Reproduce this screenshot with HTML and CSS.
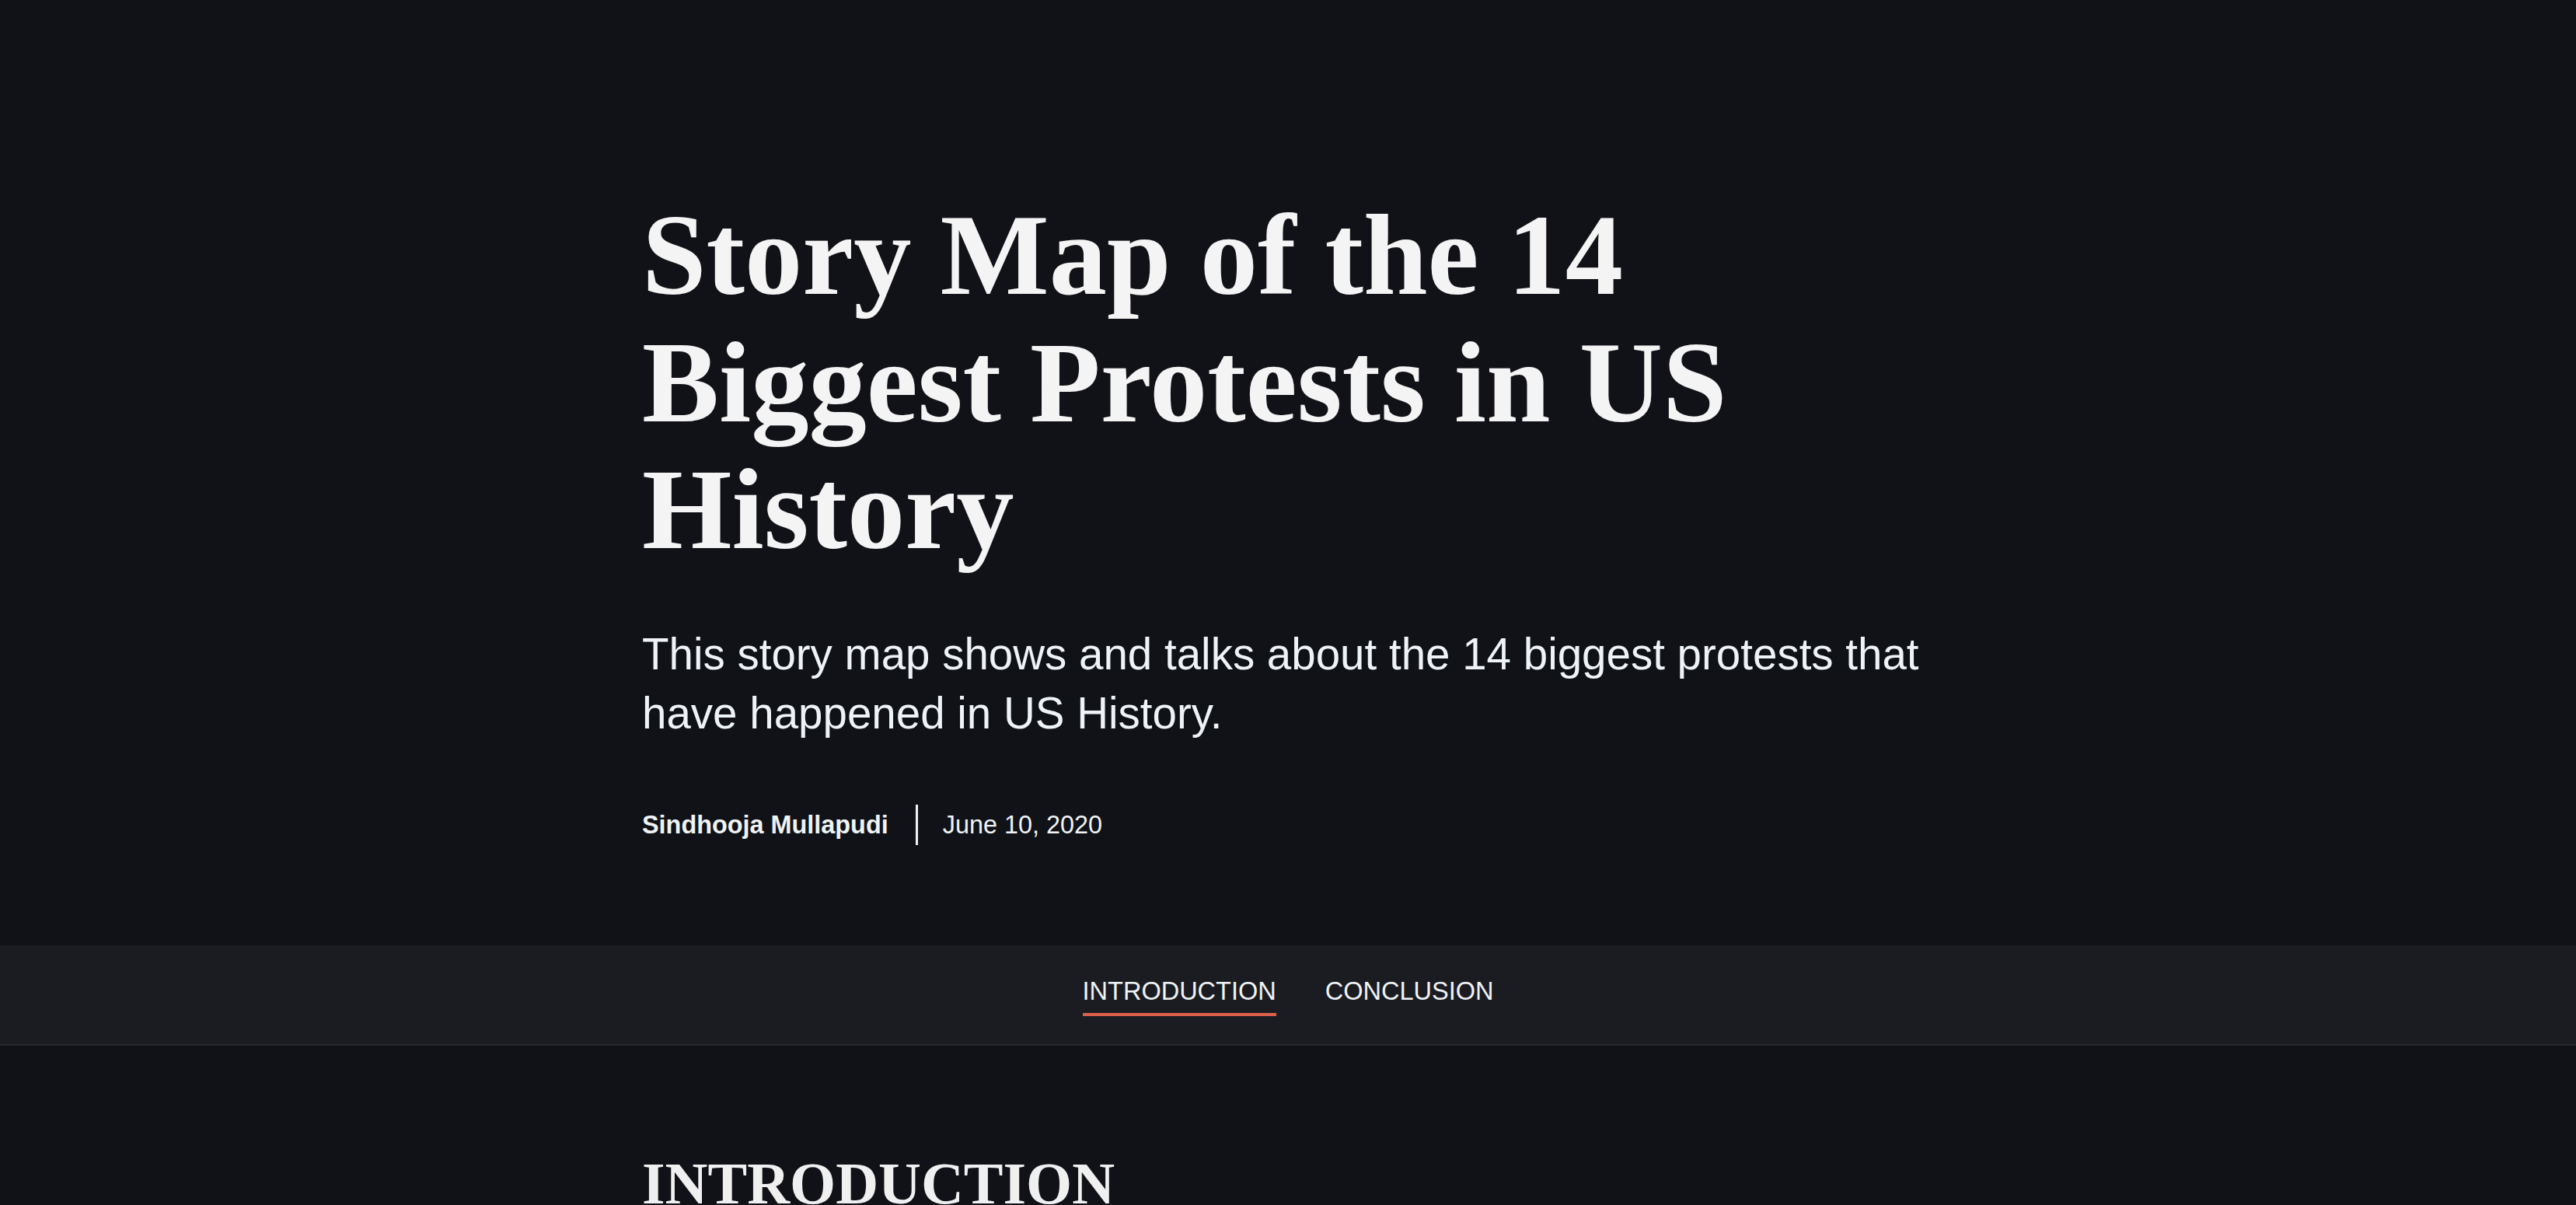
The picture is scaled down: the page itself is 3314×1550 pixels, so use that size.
FILE: index.html
```html
<!DOCTYPE html>
<html lang="en">
<head>
<meta charset="utf-8">
<title>Story Map of the 14 Biggest Protests in US History</title>
<link rel="stylesheet" href="styles.css">
</head>
<body>
<header class="cover">
  <div class="column">
    <h1 class="title">Story Map of the 14 Biggest Protests in US History</h1>
    <p class="summary">This story map shows and talks about the 14 biggest protests that have happened in US History.</p>
    <div class="byline">
      <span class="author">Sindhooja Mullapudi</span>
      <span class="divider"></span>
      <span class="date">June 10, 2020</span>
    </div>
  </div>
</header>
<nav class="navbar">
  <a class="nav-item active" href="#intro">INTRODUCTION</a>
  <a class="nav-item" href="#conclusion">CONCLUSION</a>
</nav>
<main class="content">
  <div class="column">
    <h2 class="section-title" id="intro">INTRODUCTION</h2>
  </div>
</main>
</body>
</html>
```

FILE: styles.css
```css
html, body {
  margin: 0;
  padding: 0;
}
body {
  background: #111217;
  color: #f3f3f3;
  font-family: "Liberation Sans", Arial, sans-serif;
  overflow: hidden;
}
.column {
  width: 1662px;
  margin: 0 auto;
}
.cover {
  padding: 247px 0 129px;
}
.title {
  margin: 0;
  font-family: "Liberation Serif", "Times New Roman", serif;
  font-weight: 700;
  font-size: 148.5px;
  line-height: 163.5px;
  color: #f4f4f4;
}
.summary {
  margin: 66px 0 0;
  font-size: 56.5px;
  line-height: 76px;
  color: #eef3f5;
}
.byline {
  margin-top: 79px;
  display: flex;
  align-items: center;
  font-size: 32.4px;
  line-height: 52px;
  color: #eef3f5;
}
.author {
  font-weight: 700;
}
.divider {
  width: 3px;
  height: 52px;
  background: #eef3f5;
  margin: 0 32px 0 35px;
}
.navbar {
  background: #1b1c21;
  border-bottom: 2px solid #2a2b30;
  display: flex;
  justify-content: center;
  gap: 63px;
  padding: 39px 0 36px;
}
.nav-item {
  font-size: 32.5px;
  line-height: 40px;
  color: #eef3f5;
  text-decoration: none;
  padding-bottom: 8px;
  border-bottom: 4px solid transparent;
}
.nav-item.active {
  border-bottom-color: #dc604a;
}
.content {
  padding-top: 132px;
}
.section-title {
  margin: 0;
  font-family: "Liberation Serif", "Times New Roman", serif;
  font-weight: 700;
  font-size: 76px;
  line-height: 91px;
  color: #f0f0f0;
}
```
